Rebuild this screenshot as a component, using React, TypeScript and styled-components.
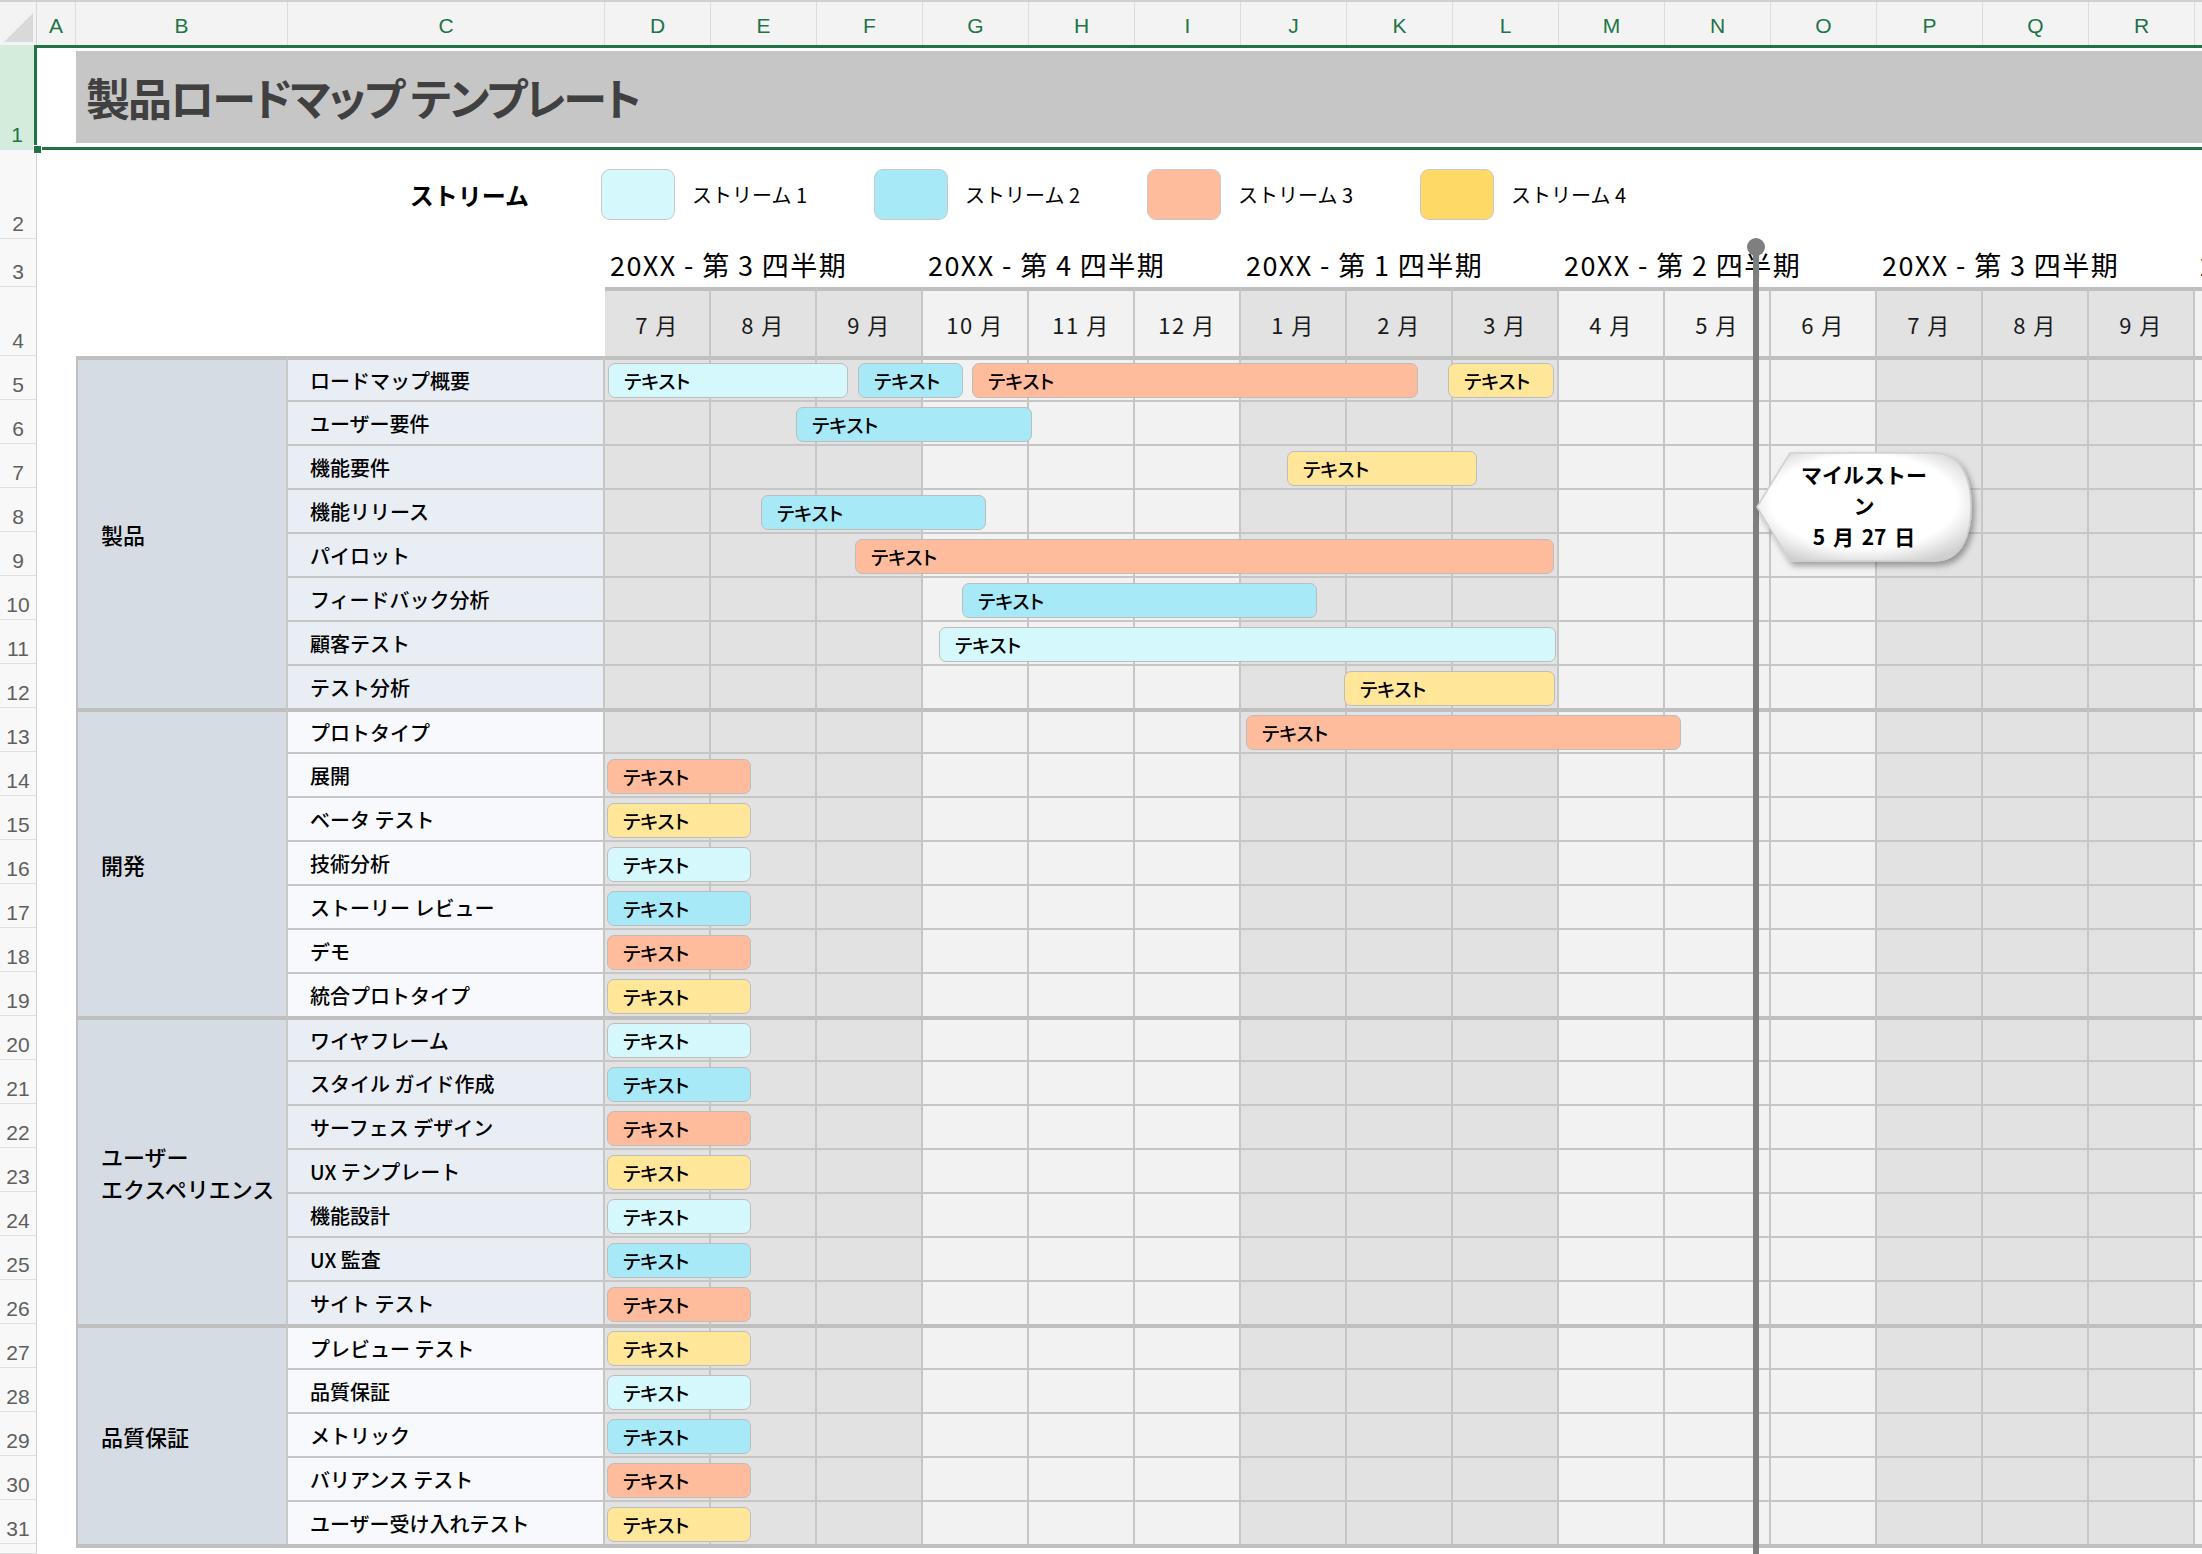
import React from 'react';
import styled, { createGlobalStyle } from 'styled-components';

type Stream = 1 | 2 | 3 | 4;
type Tone = 'shaded' | 'plain';
type BarSpec = [number, number, Stream];

interface Task {
  name: string;
  bars: BarSpec[];
}

interface Group {
  name: string;
  tone: Tone;
  tasks: Task[];
}

const MONTH_WIDTH = 106;
const COLUMNS = `37px 39px 212px 317px repeat(16, ${MONTH_WIDTH}px)`;
const LETTERS = 'ABCDEFGHIJKLMNOPQRS'.split('');
const MONTHS = [7, 8, 9, 10, 11, 12, 1, 2, 3, 4, 5, 6, 7, 8, 9, 10];
const QUARTERS = [3, 4, 1, 2, 3, 4];

const BAR_FILL: Record<Stream, string> = {
  1: '#d5f8fd',
  2: '#a7e9f6',
  3: '#ffbc9d',
  4: '#ffe699',
};
const SWATCH_FILL: Record<Stream, string> = { ...BAR_FILL, 4: '#ffd966' };

const isShadedMonth = (i: number) => Math.floor(i / 3) % 2 === 0;
const short = (s: Stream): BarSpec[] => [[2, 146, s]];

const GROUPS: Group[] = [
  {
    name: '製品',
    tone: 'shaded',
    tasks: [
      { name: 'ロードマップ概要', bars: [[3, 243, 1], [253, 358, 2], [367, 813, 3], [843, 949, 4]] },
      { name: 'ユーザー要件', bars: [[191, 427, 2]] },
      { name: '機能要件', bars: [[682, 872, 4]] },
      { name: '機能リリース', bars: [[156, 381, 2]] },
      { name: 'パイロット', bars: [[250, 949, 3]] },
      { name: 'フィードバック分析', bars: [[357, 712, 2]] },
      { name: '顧客テスト', bars: [[334, 951, 1]] },
      { name: 'テスト分析', bars: [[739, 950, 4]] },
    ],
  },
  {
    name: '開発',
    tone: 'plain',
    tasks: [
      { name: 'プロトタイプ', bars: [[641, 1076, 3]] },
      { name: '展開', bars: short(3) },
      { name: 'ベータ テスト', bars: short(4) },
      { name: '技術分析', bars: short(1) },
      { name: 'ストーリー レビュー', bars: short(2) },
      { name: 'デモ', bars: short(3) },
      { name: '統合プロトタイプ', bars: short(4) },
    ],
  },
  {
    name: 'ユーザー\nエクスペリエンス',
    tone: 'shaded',
    tasks: [
      { name: 'ワイヤフレーム', bars: short(1) },
      { name: 'スタイル ガイド作成', bars: short(2) },
      { name: 'サーフェス デザイン', bars: short(3) },
      { name: 'UX テンプレート', bars: short(4) },
      { name: '機能設計', bars: short(1) },
      { name: 'UX 監査', bars: short(2) },
      { name: 'サイト テスト', bars: short(3) },
    ],
  },
  {
    name: '品質保証',
    tone: 'plain',
    tasks: [
      { name: 'プレビュー テスト', bars: short(4) },
      { name: '品質保証', bars: short(1) },
      { name: 'メトリック', bars: short(2) },
      { name: 'バリアンス テスト', bars: short(3) },
      { name: 'ユーザー受け入れテスト', bars: short(4) },
    ],
  },
];

const GlobalStyle = createGlobalStyle`
  html, body {
    margin: 0;
    padding: 0;
    background: #ffffff;
    overflow: hidden;
  }
  body {
    font-family: "Noto Sans CJK JP", "Noto Sans", sans-serif;
    color: #000000;
  }
  * {
    box-sizing: border-box;
  }
`;

const Page = styled.div`
  position: relative;
  width: 2202px;
  height: 1554px;
  overflow: hidden;
  background: #ffffff;
`;

/* column letters */
const HeaderBar = styled.div`
  display: grid;
  grid-template-columns: ${COLUMNS};
  height: 45px;
  background: #f3f3f3;
  border-top: 2px solid #d0d0d0;
`;

const Corner = styled.div`
  display: flex;
  align-items: flex-end;
  justify-content: flex-end;
  padding: 0 3px 3px 0;
  border-right: 1px solid #d6d6d6;

  &::after {
    content: '';
    border-left: 29px solid transparent;
    border-bottom: 29px solid #d9d9d9;
  }
`;

const ColLetter = styled.div`
  display: flex;
  align-items: center;
  justify-content: center;
  padding-top: 4px;
  overflow: hidden;
  font-family: "Liberation Sans", "Noto Sans", sans-serif;
  font-size: 21px;
  color: #217346;
  border-right: 1px solid #dcdcdc;
`;

/* generic sheet rows above the table */
const SheetRow = styled.div<{ $height: number }>`
  display: grid;
  grid-template-columns: ${COLUMNS};
  height: ${({ $height }) => $height}px;
`;

const RowNumber = styled.div<{ $selected?: boolean; $row?: number }>`
  ${({ $row }) => ($row ? `grid-column: 1; grid-row: ${$row};` : '')}
  display: flex;
  align-items: flex-end;
  justify-content: center;
  padding-bottom: 2px;
  overflow: hidden;
  font-family: "Liberation Sans", "Noto Sans", sans-serif;
  font-size: 21px;
  color: ${({ $selected }) => ($selected ? '#217346' : '#5f5f5f')};
  background: ${({ $selected }) => ($selected ? '#d3ecdc' : '#f8f8f8')};
  border-bottom: 1px solid #e0e0e0;
  border-right: ${({ $selected }) => ($selected ? '3px solid #217346' : '1px solid #d0d0d0')};
`;

const TitleCell = styled.div`
  grid-column: 2 / -1;
  border-top: 3px solid #217346;
  border-bottom: 3px solid #217346;
  padding: 3px 0 4px 39px;
`;

const TitleBand = styled.h1`
  margin: 0;
  height: 100%;
  display: flex;
  align-items: center;
  padding-left: 10px;
  background: #c6c6c6;
  color: #404040;
  font-size: 44px;
  font-weight: 700;
  letter-spacing: -2px;
  font-feature-settings: "palt";
  white-space: nowrap;
`;

const LegendTitle = styled.div`
  grid-column: 4;
  display: flex;
  align-items: center;
  justify-content: flex-end;
  padding-right: 76px;
  font-size: 24px;
  font-weight: 700;
`;

const Legend = styled.div`
  grid-column: 5 / -1;
  display: flex;
  align-items: center;
  margin-left: -4px;
`;

const LegendItem = styled.div`
  display: flex;
  align-items: center;
  gap: 17px;
  width: 273px;
  font-size: 20px;
`;

const Swatch = styled.span<{ $stream: Stream }>`
  width: 74px;
  height: 51px;
  border-radius: 9px;
  border: 1px solid #c9c9c9;
  background: ${({ $stream }) => SWATCH_FILL[$stream]};
`;

const Strip = styled.div`
  grid-column: 5 / -1;
  display: grid;
  grid-template-columns: repeat(16, ${MONTH_WIDTH}px);
`;

const QuarterLabel = styled.div<{ $span: number }>`
  grid-column: span ${({ $span }) => $span};
  display: flex;
  align-items: center;
  padding: 3px 0 0 5px;
  overflow: hidden;
  white-space: nowrap;
  font-size: 27px;
  letter-spacing: 1.4px;
`;

const MonthHead = styled.div<{ $shade: boolean }>`
  display: flex;
  align-items: center;
  justify-content: center;
  background: ${({ $shade }) => ($shade ? '#e2e2e2' : '#f2f2f2')};
  border-top: 4px solid #bfbfbf;
  border-right: 2px solid #c6c6c6;
  font-size: 22px;
  letter-spacing: 1.5px;
  color: #1a1a1a;
`;

/* the roadmap table */
const DataGrid = styled.div`
  display: grid;
  grid-template-columns: ${COLUMNS};
  grid-template-rows: repeat(27, 44px) 10px;
`;

const GroupCell = styled.div<{ $row: number; $span: number }>`
  grid-column: 3;
  grid-row: ${({ $row, $span }) => `${$row} / span ${$span}`};
  display: flex;
  align-items: center;
  padding-left: 23px;
  background: #d6dce4;
  border-top: 4px solid #bfbfbf;
  border-left: 2px solid #bfbfbf;
  border-right: 2px solid #c9c9c9;
  font-size: 22px;
  font-weight: 500;
  line-height: 32px;
  white-space: pre-line;
`;

const TaskCell = styled.div<{ $row: number; $first: boolean; $tone: Tone }>`
  grid-column: 4;
  grid-row: ${({ $row }) => $row};
  display: flex;
  align-items: center;
  padding-left: 22px;
  background: ${({ $tone }) => ($tone === 'shaded' ? '#e9edf4' : '#f7f9fc')};
  border-top: ${({ $first }) => ($first ? '4px solid #bfbfbf' : '2px solid #c6c6c6')};
  border-right: 2px solid #c6c6c6;
  font-size: 20px;
  font-weight: 500;
  white-space: nowrap;
`;

const Timeline = styled.div<{ $row: number }>`
  grid-column: 5 / -1;
  grid-row: ${({ $row }) => $row};
  position: relative;
  display: grid;
  grid-template-columns: repeat(16, ${MONTH_WIDTH}px);
`;

const MonthCell = styled.div<{ $shade: boolean; $first: boolean }>`
  background: ${({ $shade }) => ($shade ? '#e2e2e2' : '#f2f2f2')};
  border-top: ${({ $first }) => ($first ? '4px solid #bfbfbf' : '2px solid #c6c6c6')};
  border-right: 2px solid #c6c6c6;
`;

const Bar = styled.div<{ $stream: Stream }>`
  position: absolute;
  top: 7px;
  height: 35px;
  display: flex;
  align-items: center;
  padding-left: 15px;
  background: ${({ $stream }) => BAR_FILL[$stream]};
  border: 1px solid #bdbdbd;
  border-radius: 7px;
  font-size: 19px;
  font-weight: 500;
  font-feature-settings: "palt";
  white-space: nowrap;
  overflow: hidden;
`;

const TableFoot = styled.div`
  grid-column: 3 / -1;
  grid-row: 28;
  border-top: 4px solid #bfbfbf;
`;

/* overlays */
const FillHandle = styled.div`
  position: absolute;
  left: 33px;
  top: 145px;
  width: 9px;
  height: 9px;
  background: #217346;
  border: 1px solid #ffffff;
  z-index: 5;
`;

const MilestoneLine = styled.div`
  position: absolute;
  left: 1753px;
  top: 248px;
  bottom: 0;
  width: 6px;
  background: #7f7f7f;
  z-index: 3;
`;

const MilestoneDot = styled.div`
  position: absolute;
  left: 1747px;
  top: 238px;
  width: 18px;
  height: 18px;
  border-radius: 50%;
  background: #7f7f7f;
  z-index: 3;
`;

const Callout = styled.div`
  position: absolute;
  left: 1752px;
  top: 448px;
  width: 226px;
  height: 124px;
  z-index: 4;
`;

const CalloutShape = styled.svg`
  position: absolute;
  left: 0;
  top: 0;
  overflow: visible;
`;

const CalloutText = styled.div`
  position: absolute;
  left: 42px;
  top: 11px;
  width: 140px;
  text-align: center;
  font-size: 21px;
  font-weight: 700;
  line-height: 31px;
  word-spacing: 3px;
`;

export default function App() {
  const tableCells: React.ReactNode[] = [];
  let row = 0;

  GROUPS.forEach((group, gi) => {
    tableCells.push(
      <GroupCell key={`group-${gi}`} $row={row + 1} $span={group.tasks.length}>
        {group.name}
      </GroupCell>
    );
    group.tasks.forEach((task, ti) => {
      row += 1;
      const first = ti === 0;
      tableCells.push(
        <RowNumber key={`num-${row}`} $row={row}>
          {row + 4}
        </RowNumber>,
        <TaskCell key={`task-${row}`} $row={row} $first={first} $tone={group.tone}>
          {task.name}
        </TaskCell>,
        <Timeline key={`line-${row}`} $row={row}>
          {MONTHS.map((_, i) => (
            <MonthCell key={i} $shade={isShadedMonth(i)} $first={first} />
          ))}
          {task.bars.map(([x0, x1, stream], bi) => (
            <Bar key={bi} $stream={stream} style={{ left: x0, width: x1 - x0 }}>
              テキスト
            </Bar>
          ))}
        </Timeline>
      );
    });
  });

  return (
    <>
      <GlobalStyle />
      <Page>
        <HeaderBar>
          <Corner />
          {LETTERS.map((l) => (
            <ColLetter key={l}>{l}</ColLetter>
          ))}
        </HeaderBar>

        <SheetRow $height={105}>
          <RowNumber $selected>1</RowNumber>
          <TitleCell>
            <TitleBand>製品ロードマップ テンプレート</TitleBand>
          </TitleCell>
        </SheetRow>

        <SheetRow $height={89}>
          <RowNumber>2</RowNumber>
          <LegendTitle>ストリーム</LegendTitle>
          <Legend>
            {([1, 2, 3, 4] as Stream[]).map((s) => (
              <LegendItem key={s}>
                <Swatch $stream={s} />
                ストリーム {s}
              </LegendItem>
            ))}
          </Legend>
        </SheetRow>

        <SheetRow $height={48}>
          <RowNumber>3</RowNumber>
          <Strip>
            {QUARTERS.map((q, i) => (
              <QuarterLabel key={i} $span={i < 5 ? 3 : 1}>
                20XX - 第 {q} 四半期
              </QuarterLabel>
            ))}
          </Strip>
        </SheetRow>

        <SheetRow $height={69}>
          <RowNumber>4</RowNumber>
          <Strip>
            {MONTHS.map((m, i) => (
              <MonthHead key={i} $shade={isShadedMonth(i)}>
                {m} 月
              </MonthHead>
            ))}
          </Strip>
        </SheetRow>

        <DataGrid>
          {tableCells}
          <RowNumber $row={28} />
          <TableFoot />
        </DataGrid>

        <FillHandle />
        <MilestoneDot />
        <MilestoneLine />
        <Callout>
          <CalloutShape width="226" height="124" viewBox="0 0 226 124">
            <defs>
              <radialGradient id="calloutFill" cx="50%" cy="45%" r="62%">
                <stop offset="70%" stopColor="#ffffff" />
                <stop offset="100%" stopColor="#d0d0d0" />
              </radialGradient>
              <filter id="calloutShadow" x="-10%" y="-10%" width="130%" height="140%">
                <feDropShadow dx="3" dy="4" stdDeviation="3" floodColor="#000000" floodOpacity="0.35" />
              </filter>
            </defs>
            <path
              d="M5 59 L38 5 H182 C212 5 219 35 219 59 C219 83 212 113 182 113 H38 Z"
              fill="url(#calloutFill)"
              stroke="#cfcfcf"
              strokeWidth="1.5"
              filter="url(#calloutShadow)"
            />
          </CalloutShape>
          <CalloutText>
            マイルストーン
            <br />5 月 27 日
          </CalloutText>
        </Callout>
      </Page>
    </>
  );
}
